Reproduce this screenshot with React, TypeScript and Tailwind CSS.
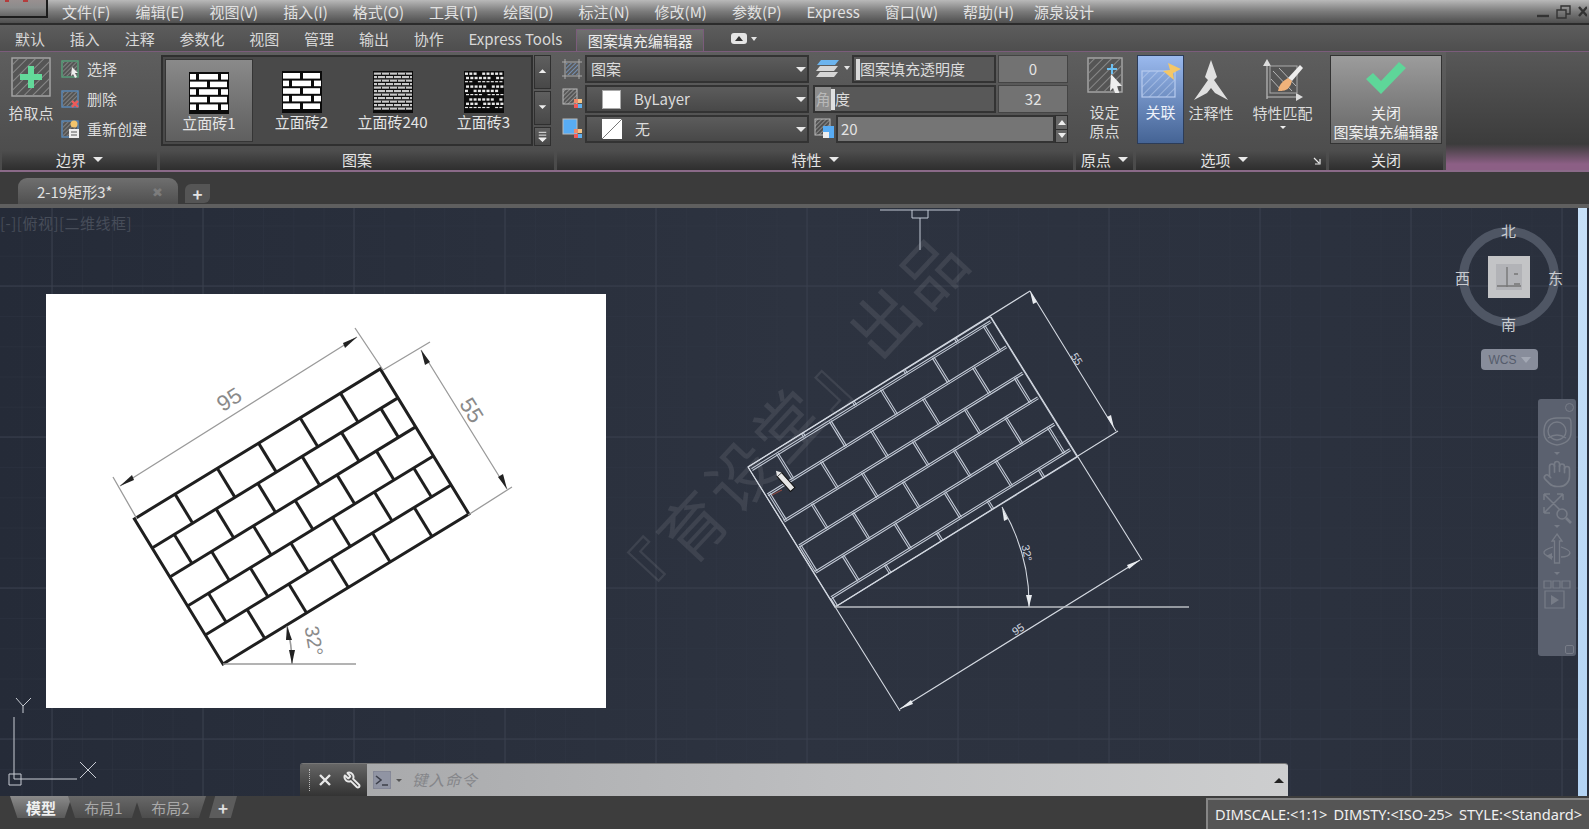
import React from "react";
import { Hand, Wrench } from "lucide-react";

const menu = ["文件(F)", "编辑(E)", "视图(V)", "插入(I)", "格式(O)", "工具(T)", "绘图(D)", "标注(N)", "修改(M)", "参数(P)", "Express", "窗口(W)", "帮助(H)"];
const tabs = ["默认", "插入", "注释", "参数化", "视图", "管理", "输出", "协作", "Express Tools"];

function HatchBox({ size = 40, border = "#a8a8a8", hatch = "#b5b5b5", fill = "#555", children }: { size?: number; border?: string; hatch?: string; fill?: string; children?: React.ReactNode }) {
  const pitch = size <= 20 ? 3 : 6;
  const id = `hatch${hatch.slice(1)}p${pitch}`;
  return (
    <svg width={size} height={size} viewBox={`0 0 ${size} ${size}`} className="shrink-0 block">
      <defs>
        <pattern id={id} width={pitch} height={pitch} patternUnits="userSpaceOnUse" patternTransform="rotate(-45)">
          <line x1="0" y1="0" x2={pitch} y2="0" stroke={hatch} strokeWidth={size <= 20 ? 0.9 : 1.1} />
        </pattern>
      </defs>
      <rect x="1" y="1" width={size - 2} height={size - 2} fill={fill} stroke={border} strokeWidth="1.4" />
      <rect x="2" y="2" width={size - 4} height={size - 4} fill={`url(#${id})`} />
      {children}
    </svg>
  );
}

function Swatch({ kind }: { kind: number }) {
  const rows: React.ReactNode[] = [];
  if (kind === 0 || kind === 1) {
    for (let r = 0; r < 5; r++) {
      const odd = (r % 2 === 1) !== (kind === 1);
      const xs = odd ? [[1, 18], [21, 38]] : [[1, 7], [10, 29], [32, 39]];
      xs.forEach(([a, b], i) => rows.push(<rect key={`${r}-${i}`} x={a} y={2 + r * 7.6} width={b - a} height={5.6} fill="#fff" />));
    }
  } else if (kind === 2) {
    for (let r = 0; r < 11; r++) {
      rows.push(<rect key={`l${r}`} x="1" y={1.5 + r * 3.5} width="38" height="2.2" fill="#c9c9c9" />);
      for (let c = 0; c < 5; c++) rows.push(<rect key={`j${r}-${c}`} x={(r % 2) * 4 + c * 8} y={1.5 + r * 3.5} width="1" height="3" fill="#222" />);
    }
  } else {
    for (let r = 0; r < 9; r++) {
      for (let c = 0; c < 9; c++) {
        if ((r * 5 + c * 3) % 7 === 2) continue;
        rows.push(<rect key={`n${r}-${c}`} x={1 + c * 4.3 + (r % 2)} y={1.5 + r * 4.3} width={3} height={r % 3 === 2 ? 1.2 : 2.4} fill="#e8e8e8" />);
      }
    }
  }
  return (
    <svg width="40" height="42" viewBox="0 0 40 42" className="block">
      <rect width="40" height="42" fill="#0b0b0b" />
      {rows}
    </svg>
  );
}

function Panel({ title, caret, className, children, corner }: { title: string; caret?: boolean; className: string; children: React.ReactNode; corner?: boolean }) {
  return (
    <div className={`flex flex-col shrink-0 ${className}`}>
      <div className="flex-1 min-h-0">{children}</div>
      <div className={`relative h-[19px] pb-[2px] flex items-center justify-center gap-[7px] bg-linear-to-b from-[#4d4d4d] to-[#2e2e2e] text-[15px] leading-none text-[#e4e4e4] ${corner ? "pr-[14px]" : ""}`}>
        <span>{title}</span>
        {caret && <span className="w-0 h-0 border-x-[5px] border-x-transparent border-t-[5px] border-t-[#e8e8e8]" />}
        {corner && (
          <svg width="8" height="8" viewBox="0 0 8 8" className="absolute right-[5px] top-[6px]">
            <path d="M1 1 L6 6 M7 2 V7 H2" stroke="#e8e8e8" strokeWidth="1.2" fill="none" />
          </svg>
        )}
      </div>
    </div>
  );
}

function Combo({ children, swatch, className }: { children: React.ReactNode; swatch?: React.ReactNode; className?: string }) {
  return (
    <div className={`h-[28px] flex items-center border-2 border-[#333] bg-linear-to-b from-[#5c5c5c] to-[#484848] text-[15px] text-[#dcdcdc] relative ${className ?? ""}`}>
      {swatch}
      <span>{children}</span>
      <span className="absolute right-[1px] top-[10px] w-0 h-0 border-x-[5px] border-x-transparent border-t-[5px] border-t-[#e8e8e8]" />
    </div>
  );
}

function SmallTool({ icon, label }: { icon: React.ReactNode; label: string }) {
  return (
    <div className="flex items-center gap-[8px] h-[20px] text-[15px] text-[#dcdcdc]">
      {icon}
      <span>{label}</span>
    </div>
  );
}

function Bricks() {
  const H = 170;
  const W = 288;
  const rows = [
    [0.165, 0.337, 0.505, 0.674, 0.838],
    [0.09, 0.26, 0.43, 0.61, 0.77, 0.93],
    [0.17, 0.34, 0.51, 0.68, 0.84],
    [0.085, 0.255, 0.42, 0.59, 0.76, 0.92],
    [0.17, 0.34, 0.51, 0.68, 0.85],
  ];
  return (
    <g transform="translate(223 664) rotate(-31.4)" stroke="#1f1f1f" strokeWidth="3" fill="none">
      <rect x="0" y={-H} width={W} height={H} />
      {[1, 2, 3, 4].map((k) => (
        <line key={k} x1="0" x2={W} y1={-H + (k * H) / 5} y2={-H + (k * H) / 5} />
      ))}
      {rows.map((r, i) =>
        r.map((u, j) => <line key={`${i}-${j}`} x1={u * W} x2={u * W} y1={-H + (i * H) / 5} y2={-H + ((i + 1) * H) / 5} />)
      )}
    </g>
  );
}

function Hatched() {
  const W = 285;
  const H = 165;
  const lines = [4.3, 34, 65, 94, 125, 155];
  const joints: [number, number, number[]][] = [
    [0, 4.3, [64, 124, 184, 244]],
    [4.3, 34, [32, 94, 154, 215, 275]],
    [34, 65, [4, 65, 124, 185, 244]],
    [65, 94, [35, 94, 154, 215, 274]],
    [94, 125, [3, 65, 124, 184, 245]],
    [125, 155, [34, 95, 154, 214, 276]],
    [155, 165, [2, 65, 126, 186, 246]],
  ];
  return (
    <g transform="translate(748 467) rotate(-31.8)" stroke="#c3cad6" strokeWidth="1.1" fill="none">
      <rect x="0" y="0" width={W} height={H} />
      {lines.map((v) => (
        <g key={v}>
          <line x1="2" x2={W - 2} y1={v - 1} y2={v - 1} />
          <line x1="2" x2={W - 2} y1={v + 1} y2={v + 1} />
        </g>
      ))}
      {joints.map(([a, b, us], i) =>
        us.map((u) => (
          <g key={`${i}-${u}`}>
            <line x1={u - 1} x2={u - 1} y1={a} y2={b} />
            <line x1={u + 1} x2={u + 1} y1={a} y2={b} />
          </g>
        ))
      )}
    </g>
  );
}

function CanvasDrawing() {
  const v: number[] = [];
  for (let x = 52; x < 1589; x += 151) v.push(x);
  const h: number[] = [286, 437, 588, 739];
  const mv: number[] = [];
  for (let x = 22; x < 1589; x += 30.2) mv.push(x);
  const mh: number[] = [];
  for (let y = 226; y < 800; y += 30.2) mh.push(y);
  return (
    <svg viewBox="0 208 1578 588" className="absolute inset-0 w-full h-full">
      {mv.map((x) => <line key={x} x1={x} x2={x} y1="208" y2="796" stroke="#343b49" strokeWidth="1" opacity="0.35" />)}
      {mh.map((y) => <line key={y} y1={y} y2={y} x1="0" x2="1578" stroke="#343b49" strokeWidth="1" opacity="0.35" />)}
      {v.map((x) => <line key={x} x1={x} x2={x} y1="208" y2="796" stroke="#3a414f" strokeWidth="1" />)}
      {h.map((y) => <line key={y} y1={y} y2={y} x1="0" x2="1578" stroke="#3a414f" strokeWidth="1" />)}

      <text x="790" y="448" textAnchor="middle" fontSize="66" letterSpacing="4" fill="#ffffff" fillOpacity="0.085" transform="rotate(-47 790 424)" fontFamily="'Noto Sans CJK SC', sans-serif">『育设堂』出品</text>

      <rect x="46" y="294" width="560" height="414" fill="#fff" />
      <Bricks />
      <g stroke="#9a9a9a" strokeWidth="1.3" fill="none">
        <path d="M137 519 L113 477 M120 486 L357 337 M383 370 L355 328" />
        <path d="M383 370 L430 342 M421 350 L507 489 M468 515 L512 487" />
        <path d="M223 664 H356 M287 626 Q292 645 292 664" strokeWidth="1.6" />
      </g>
      <g fill="#222">
        <path d="M120 486 L132 475 L134 480 Z" />
        <path d="M357 337 L345 348 L343 343 Z" />
        <path d="M421 350 L430 362 L425 365 Z" />
        <path d="M507 489 L498 477 L503 474 Z" />
        <path d="M287 626 L292 640 L286 640 Z" />
        <path d="M292 664 L289 650 L295 650 Z" />
      </g>
      <text x="229" y="407" textAnchor="middle" fontSize="22" fill="#8a8a8a" transform="rotate(-32 229 399)" fontFamily="'Liberation Sans', sans-serif">95</text>
      <text x="472" y="418" textAnchor="middle" fontSize="22" fill="#8a8a8a" transform="rotate(58 472 410)" fontFamily="'Liberation Sans', sans-serif">55</text>
      <text x="314" y="648" textAnchor="middle" fontSize="20" fill="#8a8a8a" transform="rotate(80 314 641)" fontFamily="'Liberation Sans', sans-serif">32°</text>

      <g stroke="#c3cad6" strokeWidth="1" fill="none">
        <path d="M880 210 H960 M912 210 V218 H928 V210 M920 218 V250" />
      </g>
      <Hatched />
      <g stroke="#d4d9e1" strokeWidth="1.1" fill="none">
        <path d="M748 467 L1030 291 M835 607 L1118 431 M991 317 L1142 560 M748 467 L900 711" />
        <path d="M1030 291 L1116 431 M900 709 L1140 560" />
        <path d="M1002 507 Q1030 555 1029 607" />
      </g>
      <line x1="835" y1="607" x2="1189" y2="607" stroke="#b9bcc2" strokeWidth="1.6" />
      <g fill="#e8ebef">
        <path d="M1030 291 L1037 302 L1033 304 Z" />
        <path d="M1114 428 L1107 417 L1111 415 Z" />
        <path d="M900 709 L911 700 L913 704 Z" />
        <path d="M1140 560 L1129 569 L1127 565 Z" />
        <path d="M1002 507 L1008 519 L1004 521 Z" />
        <path d="M1029 607 L1026 595 L1032 595 Z" />
      </g>
      <g fill="#d4d9e1" fontSize="11" fontFamily="'Liberation Sans', sans-serif" textAnchor="middle">
        <text x="1077" y="363" transform="rotate(58 1077 359)">55</text>
        <text x="1018" y="633" transform="rotate(-32 1018 629)">95</text>
        <text x="1027" y="557" transform="rotate(80 1027 553)">32°</text>
      </g>
      <g transform="rotate(48 786 482)">
        <rect x="776" y="479" width="20" height="6" fill="#e6e6e6" stroke="#111" strokeWidth="1" />
        <path d="M776 479 L771 482 L776 485 Z" fill="#e6e6e6" />
      </g>
      <line x1="772" y1="495" x2="782" y2="490" stroke="#9a4a40" strokeWidth="1" />

      <g stroke="#c9cdd4" strokeWidth="1" fill="none">
        <path d="M14 717 V779 H77 M9 774 H21 V785 H9 Z" />
        <path d="M80 762 L96 778 M96 762 L80 778" />
        <path d="M16 698 L23 706 L31 698 M23 706 V713" />
      </g>
    </svg>
  );
}

function ViewCube() {
  const label = "absolute text-[15px] leading-none text-[#c9ccd1]";
  return (
    <div className="absolute left-[1455px] top-[15px] w-[112px] h-[120px]">
      <div className="absolute left-[4px] top-[4px] w-[100px] h-[100px] rounded-full border-[9px] border-[#4f5664]" />
      <div className="absolute left-[33px] top-[33px] w-[42px] h-[42px] bg-[#c3c4c6] flex items-center justify-center">
        <div className="w-[26px] h-[26px] bg-[#b2b3b7] flex items-center justify-center">
          <svg width="26" height="26" viewBox="0 0 26 26">
            <path d="M11 3 V23 M1 22 H25 M18 10 H22 M18 20 H24" stroke="#777" strokeWidth="1.4" fill="none" />
          </svg>
        </div>
      </div>
      <span className={`${label} left-[46px] top-[0px]`}>北</span>
      <span className={`${label} left-[46px] top-[93px]`}>南</span>
      <span className={`${label} left-[0px] top-[47px]`}>西</span>
      <span className={`${label} left-[93px] top-[47px]`}>东</span>
    </div>
  );
}

function NavBar() {
  const s = "#777c87";
  return (
    <div className="absolute left-[1538px] top-[191px] w-[38px] h-[257px] rounded-[3px] bg-[#5b616f] flex flex-col items-center pt-[4px]">
      <div className="self-end mr-[2px] w-[9px] h-[9px] rounded-full border border-[#777c87]" />
      <svg width="30" height="38" viewBox="0 0 30 38" className="mt-[2px]">
        <path d="M15 4 H26 Q29 4 29 9 V18 Q29 29 15 31 Q2 29 2 18 Q2 4 15 4 Z" stroke={s} strokeWidth="1.4" fill="none" />
        <circle cx="15" cy="17" r="9" stroke={s} strokeWidth="1.4" fill="none" />
        <path d="M6 24 Q15 18 24 24" stroke={s} strokeWidth="1.4" fill="none" />
      </svg>
      <div className="w-0 h-0 border-x-[3px] border-x-transparent border-t-[3px] border-t-[#777c87]" />
      <Hand size={30} strokeWidth={1.3} color={s} className="mt-[4px]" />
      <svg width="32" height="34" viewBox="0 0 32 34" className="mt-[2px]">
        <path d="M3 3 L22 22 M3 22 L22 3 M3 3 H9 M3 3 V9 M22 3 H16 M22 3 V9 M3 22 H9 M3 22 V16" stroke={s} strokeWidth="1.5" fill="none" />
        <circle cx="21" cy="23" r="5" stroke={s} strokeWidth="1.5" fill="#5b616f" />
        <path d="M25 27 L30 32" stroke={s} strokeWidth="2.6" />
      </svg>
      <div className="w-0 h-0 border-x-[3px] border-x-transparent border-t-[3px] border-t-[#777c87]" />
      <svg width="30" height="38" viewBox="0 0 30 38" className="mt-[4px]">
        <path d="M15 2 L20 9 H17.5 V31 H12.5 V9 H10 Z" stroke={s} strokeWidth="1.3" fill="none" />
        <path d="M11 15 Q1 18 2 21 Q3 24 11 25 M19 15 Q28 18 28 21 Q27 25 19 25" stroke={s} strokeWidth="1.3" fill="none" />
        <path d="M10 21 L4 24 L10 28 Z" fill={s} />
      </svg>
      <div className="w-0 h-0 border-x-[3px] border-x-transparent border-t-[3px] border-t-[#777c87] mt-[2px]" />
      <svg width="30" height="32" viewBox="0 0 30 32" className="mt-[5px]">
        <path d="M2 1 H9 V8 H2 Z M11 1 H18 V8 H11 Z M20 1 H28 V8 H20 Z M3 11 H22 V28 H3 Z" stroke={s} strokeWidth="1.2" fill="none" />
        <path d="M9 15 L17 20 L9 25 Z" fill={s} />
      </svg>
      <div className="mt-auto mb-[2px] self-end mr-[2px] w-[9px] h-[9px] border border-[#777c87] rounded-[2px]" />
    </div>
  );
}

export default function App() {
  return (
    <div className="w-full h-[829px] flex flex-col overflow-hidden bg-[#3c3c3c] text-[#dcdcdc] font-['Noto_Sans_CJK_SC','Noto_Sans',sans-serif]">
      {/* title bar */}
      <div className="h-[25px] shrink-0 flex items-center relative bg-linear-to-b from-[#b9b9b9] via-[#7b7b7b] to-[#4f4f4f] border-b-2 border-[#2b2b2b]">
        <div className="w-[48px] h-[19px] -mt-[6px] bg-linear-to-b from-[#9a9090] via-[#8c8c8c] to-[#666] border-r-2 border-b-2 border-[#1c1c1c] shrink-0 flex items-start gap-[14px] pl-[5px]">
          <span className="w-[4px] h-[3px] bg-[#b43c3c]" />
          <span className="w-[5px] h-[3px] bg-[#b43c3c]" />
        </div>
        <div className="flex items-center gap-[25px] ml-[14px] text-[15px] leading-none text-[#e2e2e2]">
          {menu.map((m) => <span key={m} className="whitespace-nowrap">{m}</span>)}
          <span className="whitespace-nowrap -ml-[5px]">源泉设计</span>
        </div>
        <div className="ml-auto mr-[2px] flex items-center gap-[8px] text-[#2b2b2b]">
          <svg width="50" height="16" viewBox="0 0 50 16">
            <path d="M0 12 H12" stroke="#333" strokeWidth="2.4" />
            <path d="M20 6 H29 V14 H20 Z M24 6 V2 H33 V10 H29" stroke="#333" strokeWidth="1.4" fill="none" />
            <path d="M42 3 L50 12 M50 3 L42 12" stroke="#333" strokeWidth="2.4" />
          </svg>
        </div>
      </div>
      {/* tabs */}
      <div className="h-[26px] shrink-0 flex items-end bg-linear-to-b from-[#5d5d5d] to-[#4e4e4e] text-[15px] leading-none text-[#d8d8d8]">
        <div className="flex items-center h-[25px] pl-[15px] gap-[24.8px]">
          {tabs.map((t) => <span key={t} className="whitespace-nowrap">{t}</span>)}
        </div>
        <div className="ml-[14px] h-[22px] w-[128px] flex items-center justify-center border border-b-0 border-[#7b5c7b] bg-linear-to-b from-[#707070] to-[#585858] text-[#ececec]">图案填充编辑器</div>
        <svg width="26" height="12" viewBox="0 0 26 12" className="ml-[27px] mb-[6px]">
          <rect x="0" y="0" width="16" height="11" rx="3" fill="#e4e4e4" />
          <path d="M8 3 L12 8 H4 Z" fill="#333" />
          <path d="M20 4 H26 L23 8 Z" fill="#e4e4e4" />
        </svg>
      </div>
      {/* ribbon */}
      <div className="h-[121px] shrink-0 flex gap-[3px] pl-[2px] border-t border-[#7b5c7b] border-b-2 bg-linear-to-b from-[#5e5e5e] to-[#4a4a4a] [border-bottom-color:#8a6a88]">
        <Panel title="边界" caret className="w-[155px]">
          <div className="flex h-full pt-[5px] pl-[6px]">
            <div className="flex flex-col items-center w-[46px]">
              <HatchBox size={40}>
                <path d="M17 9 H23 V17 H31 V23 H23 V31 H17 V23 H9 V17 H17 Z" fill="#63d99a" />
              </HatchBox>
              <span className="text-[15px] leading-none mt-[8px] whitespace-nowrap">拾取点</span>
            </div>
            <div className="flex flex-col gap-[10px] ml-[7px] pt-[2px]">
              <SmallTool label="选择" icon={
                <HatchBox size={18} border="#58a37c">
                  <path d="M11 7 L17 13 H14 L16 17 L14 18 L12 14 L10 16 Z" fill="#eee" />
                </HatchBox>} />
              <SmallTool label="删除" icon={
                <HatchBox size={18} border="#5c8cbc">
                  <path d="M11 11 L17 17 M17 11 L11 17" stroke="#ef5a5a" strokeWidth="2.4" />
                </HatchBox>} />
              <SmallTool label="重新创建" icon={
                <HatchBox size={18} border="#5c8cbc">
                  <circle cx="13" cy="4" r="3.5" fill="#f2c46c" />
                  <rect x="8" y="9" width="10" height="9" fill="#eee" />
                  <path d="M10 12 H16 M10 15 H16" stroke="#555" />
                </HatchBox>} />
            </div>
          </div>
        </Panel>
        <Panel title="图案" className="w-[394px]">
          <div className="flex h-full pt-[3px] pl-[1px] pr-[3px]">
            <div className="w-[373px] h-[91px] flex border-2 border-[#2f2f2f] bg-[#494949] p-[2px]">
              {["立面砖1", "立面砖2", "立面砖240", "立面砖3"].map((n, i) => (
                <div key={n} className={`h-full flex flex-col items-center pt-[12px] ${i === 0 ? "w-[88px] bg-linear-to-b from-[#8a8a8a] to-[#5f5f5f] border border-[#353535] mr-[3px]" : "w-[91px]"}`}>
                  <Swatch kind={i} />
                  <span className="text-[15px] leading-none mt-[1px] whitespace-nowrap text-[#e4e4e4]">{n}</span>
                </div>
              ))}
            </div>
            <div className="w-[17px] h-[91px] flex flex-col gap-[2px] ml-[1px]">
              {["M4 9 L8 5 L12 9 Z", "M4 5 L8 9 L12 5 Z", "M4 3 H12 M4 6 H12 M4 9 L8 13 L12 9 Z"].map((d, i) => (
                <div key={d} className={`${i === 2 ? "h-[19px]" : "flex-1"} bg-linear-to-b from-[#5f5f5f] to-[#484848] border border-[#2f2f2f] flex items-center justify-center`}>
                  <svg width="16" height="16" viewBox="0 0 16 16"><path d={d} fill="#eee" stroke={i === 2 ? "#eee" : "none"} /></svg>
                </div>
              ))}
            </div>
          </div>
        </Panel>
        <Panel title="特性" caret className="w-[516px]">
          <div className="flex h-full pt-[3px] pl-[5px] gap-[3px]">
            <div className="flex flex-col gap-[2px] w-[247px]">
              <div className="flex items-center gap-[3px]">
                <svg width="20" height="20" viewBox="0 0 20 20" className="shrink-0">
                  <defs>
                    <pattern id="bluehatch" width="3" height="3" patternUnits="userSpaceOnUse" patternTransform="rotate(-45)">
                      <line x1="0" y1="0" x2="3" y2="0" stroke="#7fa8dc" strokeWidth="1.4" />
                    </pattern>
                  </defs>
                  <rect x="4" y="4" width="12" height="12" fill="url(#bluehatch)" />
                  <path d="M0 3 H20 M0 17 H20 M3 0 V20 M17 0 V20" stroke="#aaa" />
                </svg>
                <Combo className="flex-1 pl-[4px]">图案</Combo>
              </div>
              <div className="flex items-center gap-[3px]">
                <svg width="20" height="22" viewBox="0 0 20 22" className="shrink-0">
                  <defs>
                    <pattern id="tinyhatch" width="3" height="3" patternUnits="userSpaceOnUse" patternTransform="rotate(-45)">
                      <line x1="0" y1="0" x2="3" y2="0" stroke="#c4c4c4" strokeWidth="1" />
                    </pattern>
                  </defs>
                  <rect x="1" y="1" width="14" height="15" fill="url(#tinyhatch)" stroke="#bbb" />
                  <rect x="12" y="11" width="4" height="4" fill="#ef8a6a" /><rect x="16" y="11" width="4" height="4" fill="#f2c488" />
                  <rect x="12" y="16" width="4" height="4" fill="#ef5a5a" /><rect x="16" y="16" width="4" height="4" fill="#5fb0ef" />
                </svg>
                <Combo className="flex-1" swatch={<span className="ml-[15px] mr-[13px] w-[19px] h-[19px] bg-white border border-[#aaa]" />}>ByLayer</Combo>
              </div>
              <div className="flex items-center gap-[3px]">
                <svg width="20" height="22" viewBox="0 0 20 22" className="shrink-0">
                  <rect x="1" y="1" width="14" height="15" fill="#58acf4" stroke="#bbb" />
                  <rect x="12" y="11" width="4" height="4" fill="#ef8a6a" /><rect x="16" y="11" width="4" height="4" fill="#f2c488" />
                  <rect x="12" y="16" width="4" height="4" fill="#ef5a5a" /><rect x="16" y="16" width="4" height="4" fill="#5fb0ef" />
                </svg>
                <Combo className="flex-1" swatch={
                  <svg width="20" height="20" viewBox="0 0 20 20" className="ml-[15px] mr-[13px]">
                    <rect width="20" height="20" fill="#fff" />
                    <path d="M0 20 L20 0" stroke="#777" />
                  </svg>}>无</Combo>
              </div>
            </div>
            <div className="flex flex-col gap-[2px] w-[256px] text-[15px]">
              <div className="flex items-center h-[28px]">
                <svg width="36" height="24" viewBox="0 0 36 24" className="shrink-0 ml-[3px]">
                  <path d="M6 3 H24 L20 8 H2 Z" fill="#6cb4ee" />
                  <path d="M5 9 H23 L19 14 H1 Z" fill="#d6d6d6" />
                  <path d="M5 15 H23 L19 20 H1 Z" fill="#d6d6d6" />
                  <path d="M29 9 H35 L32 13 Z" fill="#e4e4e4" />
                </svg>
                <div className="h-[28px] w-[145px] ml-[1px] flex items-center border-2 border-[#333] bg-[#585858] text-[#dcdcdc]">
                  <span className="w-[4px] h-[21px] bg-[#d8d8d8] ml-[2px]" />
                  <span className="whitespace-nowrap">图案填充透明度</span>
                </div>
                <div className="h-[28px] w-[71px] ml-[2px] flex items-center justify-center bg-[#727272] border border-[#444] text-[#e4e4e4]">0</div>
              </div>
              <div className="flex items-center h-[28px]">
                <div className="h-[28px] w-[187px] flex items-center border-2 border-[#333] bg-[#585858] text-[#dcdcdc] ml-[1px]">
                  <span className="w-[16px] h-[24px] bg-[#8d8d8d] flex items-center justify-center text-[#b8b8b8] overflow-hidden">角</span>
                  <span className="w-[4px] h-[21px] bg-[#e0e0e0]" />
                  <span>度</span>
                </div>
                <div className="h-[28px] w-[71px] ml-[2px] flex items-center justify-center bg-[#727272] border border-[#444] text-[#e4e4e4]">32</div>
              </div>
              <div className="flex items-center h-[28px]">
                <svg width="21" height="22" viewBox="0 0 21 22" className="shrink-0 ml-[2px]">
                  <rect x="1" y="1" width="15" height="16" fill="url(#tinyhatch)" stroke="#bbb" />
                  <path d="M9 8 H20 V20 H9 Z" fill="#58acf4" />
                  <rect x="9" y="14" width="6" height="6" fill="#eee" />
                </svg>
                <div className="h-[28px] w-[222px] ml-[1px] pl-[3px] flex items-center border-2 border-[#333] bg-[#757575] text-[#e4e4e4]">20</div>
                <div className="h-[28px] w-[13px] flex flex-col gap-[1px] bg-[#2f2f2f] p-[1px]">
                  <div className="flex-1 bg-[#666] flex items-center justify-center"><span className="w-0 h-0 border-x-[4px] border-x-transparent border-b-[5px] border-b-[#eee]" /></div>
                  <div className="flex-1 bg-[#666] flex items-center justify-center"><span className="w-0 h-0 border-x-[4px] border-x-transparent border-t-[5px] border-t-[#eee]" /></div>
                </div>
              </div>
            </div>
          </div>
        </Panel>
        <Panel title="原点" caret className="w-[57px]">
          <div className="flex flex-col items-center pt-[5px] text-[15px] leading-[19px]">
            <div className="relative w-[36px] h-[40px]">
              <HatchBox size={36}>
                <path d="M20 12 H30 M25 7 V17" stroke="#6cc0f2" strokeWidth="2" />
                <path d="M24 17 L35 29 H30 L33 38 L29 38 L26 31 L23 34 Z" fill="#eee" />
              </HatchBox>
            </div>
            <span className="mt-[5px]">设定</span>
            <span>原点</span>
          </div>
        </Panel>
        <Panel title="选项" caret corner className="w-[190px]">
          <div className="flex pt-[3px] h-full pl-[1px] text-[15px] leading-none">
            <div className="w-[47px] h-[89px] flex flex-col items-center pt-[6px] border border-[#2c3c58] bg-linear-to-b from-[#9ab9ee] to-[#456495] text-[#eef2fa]">
              <svg width="40" height="36" viewBox="0 0 40 36">
                <defs>
                  <pattern id="hatchblue" width="6" height="6" patternUnits="userSpaceOnUse" patternTransform="rotate(-45)">
                    <line x1="0" y1="0" x2="6" y2="0" stroke="#c7d8f4" strokeWidth="1" />
                  </pattern>
                </defs>
                <rect x="1" y="9" width="33" height="26" fill="url(#hatchblue)" stroke="#b8ccee" strokeWidth="1.2" />
                <path d="M27 1 L40 7 L32 11 L33 18 L22 9 L29 8 Z" fill="#f5c766" />
              </svg>
              <span className="mt-[6px]">关联</span>
            </div>
            <div className="w-[50px] flex flex-col items-center pt-[5px] ml-[2px]">
              <svg width="36" height="42" viewBox="0 0 36 42">
                <path d="M18 0 L24 17 L21 20 L35 40 L22 33 L18 28 L14 33 L1 40 L15 20 L12 17 Z" fill="#e0e0e0" />
              </svg>
              <span className="mt-[3px] whitespace-nowrap">注释性</span>
            </div>
            <div className="flex-1 flex flex-col items-center pt-[4px] ml-[3px]">
              <svg width="42" height="43" viewBox="0 0 42 43">
                <path d="M5 40 V6 M5 38 H36" stroke="#bbb" strokeWidth="1.2" />
                <path d="M5 0 L9 7 H1 Z M41 38 L34 34 V42 Z" fill="#ddd" />
                <rect x="8" y="7" width="27" height="27" fill="#555" stroke="#aaa" />
                <path d="M11 12 L30 32 M17 9 L34 27 M9 20 L20 32" stroke="#b5b5b5" />
                <path d="M38 6 L26 19 L30 22 L41 9 Z" fill="#eee" />
                <path d="M26 19 Q17 24 16 32 Q28 33 30 22 Z" fill="#f0b27a" />
              </svg>
              <span className="mt-[3px] whitespace-nowrap">特性匹配</span>
              <span className="mt-[6px] w-0 h-0 border-x-[3px] border-x-transparent border-t-[3px] border-t-[#eee]" />
            </div>
          </div>
        </Panel>
        <Panel title="关闭" className="w-[114px]">
          <div className="pt-[3px]">
            <div className="h-[89px] mx-[1px] flex flex-col items-center pt-[6px] border border-[#333] bg-linear-to-b from-[#9c9c9c] to-[#666] text-[15px] leading-[19px] text-[#f0f0f0]">
              <svg width="40" height="32" viewBox="0 0 40 32">
                <path d="M0 17 L7 11 L15 19 L33 0 L40 6 L15 32 Z" fill="#5ed699" />
              </svg>
              <span className="mt-[9px]">关闭</span>
              <span className="whitespace-nowrap">图案填充编辑器</span>
            </div>
          </div>
        </Panel>
        <div className="flex-1 bg-linear-to-b from-[#585858] from-0% via-[#3c3c3c] via-78% to-[#8c5f85] to-95%" />
      </div>
      {/* document tabs */}
      <div className="h-[36px] shrink-0 flex items-end gap-[7px] pl-[18px] bg-[#3b3b3b] border-b-4 border-[#5f5f5f]">
        <div className="h-[26px] w-[160px] flex items-center justify-between pl-[19px] pr-[15px] rounded-t-[9px] bg-linear-to-b from-[#6f6f6f] to-[#505050] text-[15px] leading-none text-[#e0e0e0]">
          <span>2-19矩形3*</span>
          <span className="text-[#7c7c7c] text-[13px]">✖</span>
        </div>
        <div className="h-[19px] w-[25px] flex items-center justify-center rounded-tl-[6px] rounded-br-[6px] bg-[#555] text-[#e4e4e4] text-[17px] leading-none font-bold mb-[1px]">+</div>
      </div>
      {/* canvas */}
      <div className="flex-1 min-h-0 flex bg-linear-to-r from-[#252b38] via-[#2d3340] to-[#2a303d]">
        <div className="relative flex-1 min-w-0 overflow-hidden">
          <CanvasDrawing />
          <span className="absolute left-0 top-[7px] text-[15px] leading-none tracking-[0.5px] text-[#474d59]">[-][俯视][二维线框]</span>
          <ViewCube />
          <div className="absolute left-[1481px] top-[141px] w-[57px] h-[21px] rounded-[4px] bg-[#888d9b] flex items-center justify-center gap-[4px] text-[12px] leading-none text-[#555c6c] font-['Liberation_Sans',sans-serif]">
            WCS
            <span className="w-0 h-0 border-x-[5px] border-x-transparent border-t-[6px] border-t-[#a3a8b4]" />
          </div>
          <NavBar />
          <div className="absolute left-[300px] bottom-0 w-[988px] h-[33px] flex rounded-t-[3px] border-t border-[#777] overflow-hidden">
            <div className="w-[67px] flex items-center bg-linear-to-b from-[#666] to-[#333] pl-[9px] shrink-0">
              <div className="h-[22px] border-l border-dotted border-[#bbb] mr-[8px]" />
              <svg width="14" height="14" viewBox="0 0 14 14" className="shrink-0"><path d="M2 2 L12 12 M12 2 L2 12" stroke="#e8e8e8" strokeWidth="2.4" /></svg>
              <Wrench size={18} strokeWidth={2.6} color="#e8e8e8" className="ml-[11px] shrink-0 -scale-x-100" />
            </div>
            <div className="flex-1 flex items-center bg-linear-to-r from-[#a9aaac] via-[#bdbec0] to-[#cdcecf] pl-[6px]">
              <svg width="18" height="18" viewBox="0 0 18 18" className="shrink-0">
                <rect x="0" y="0" width="18" height="18" rx="2" fill="#9094a3" stroke="#7c7f8e" />
                <path d="M3 5 L8 9 L3 13 M9 14 H15" stroke="#3c3f4a" strokeWidth="1.6" fill="none" />
              </svg>
              <span className="ml-[5px] w-0 h-0 border-x-[3px] border-x-transparent border-t-[3px] border-t-[#555]" />
              <span className="ml-[10px] text-[15.5px] italic text-[#85868a] tracking-[1px]">键入命令</span>
              <span className="ml-auto mr-[4px] w-0 h-0 border-x-[5px] border-x-transparent border-b-[5px] border-b-[#222]" />
            </div>
          </div>
        </div>
        <div className="w-[9px] shrink-0 bg-linear-to-b from-[#c7e0f8] to-[#b4d4f4]" />
        <div className="w-[2px] shrink-0 bg-[#2a303d]" />
      </div>
      {/* status */}
      <div className="h-[33px] shrink-0 flex bg-[#3d3d3d] relative">
        <div className="flex items-start pl-[10px] text-[15px] leading-none">
          <div className="h-[22px] w-[62px] flex items-center justify-center bg-linear-to-b from-[#8a8a8a] to-[#5a5a5a] font-bold text-[#f0f0f0] [clip-path:polygon(0_0,100%_0,88%_100%,12%_100%)]">模型</div>
          <div className="h-[22px] w-[71px] -ml-[4px] flex items-center justify-center bg-linear-to-b from-[#686868] to-[#4c4c4c] text-[#a9a9a9] [clip-path:polygon(0_0,100%_0,90%_100%,10%_100%)]">布局1</div>
          <div className="h-[22px] w-[71px] -ml-[4px] flex items-center justify-center bg-linear-to-b from-[#686868] to-[#4c4c4c] text-[#a9a9a9] [clip-path:polygon(0_0,100%_0,90%_100%,10%_100%)]">布局2</div>
          <div className="h-[22px] w-[28px] ml-[3px] flex items-center justify-center bg-[#5c5c5c] text-[17px] font-bold text-[#e0e0e0] [clip-path:polygon(22%_0,100%_0,78%_100%,0_100%)]">+</div>
        </div>
        <div className="ml-auto w-[383px] mt-[2px] flex items-center gap-[6px] pl-[7px] bg-[#555] border-t-2 border-l-2 border-[#868686] text-[14.6px] leading-none text-[#f0f0f0] whitespace-nowrap font-['Noto_Sans',sans-serif]">
          <span>DIMSCALE:&lt;1:1&gt;</span>
          <span>DIMSTY:&lt;ISO-25&gt;</span>
          <span>STYLE:&lt;Standard&gt;</span>
        </div>
      </div>
    </div>
  );
}
